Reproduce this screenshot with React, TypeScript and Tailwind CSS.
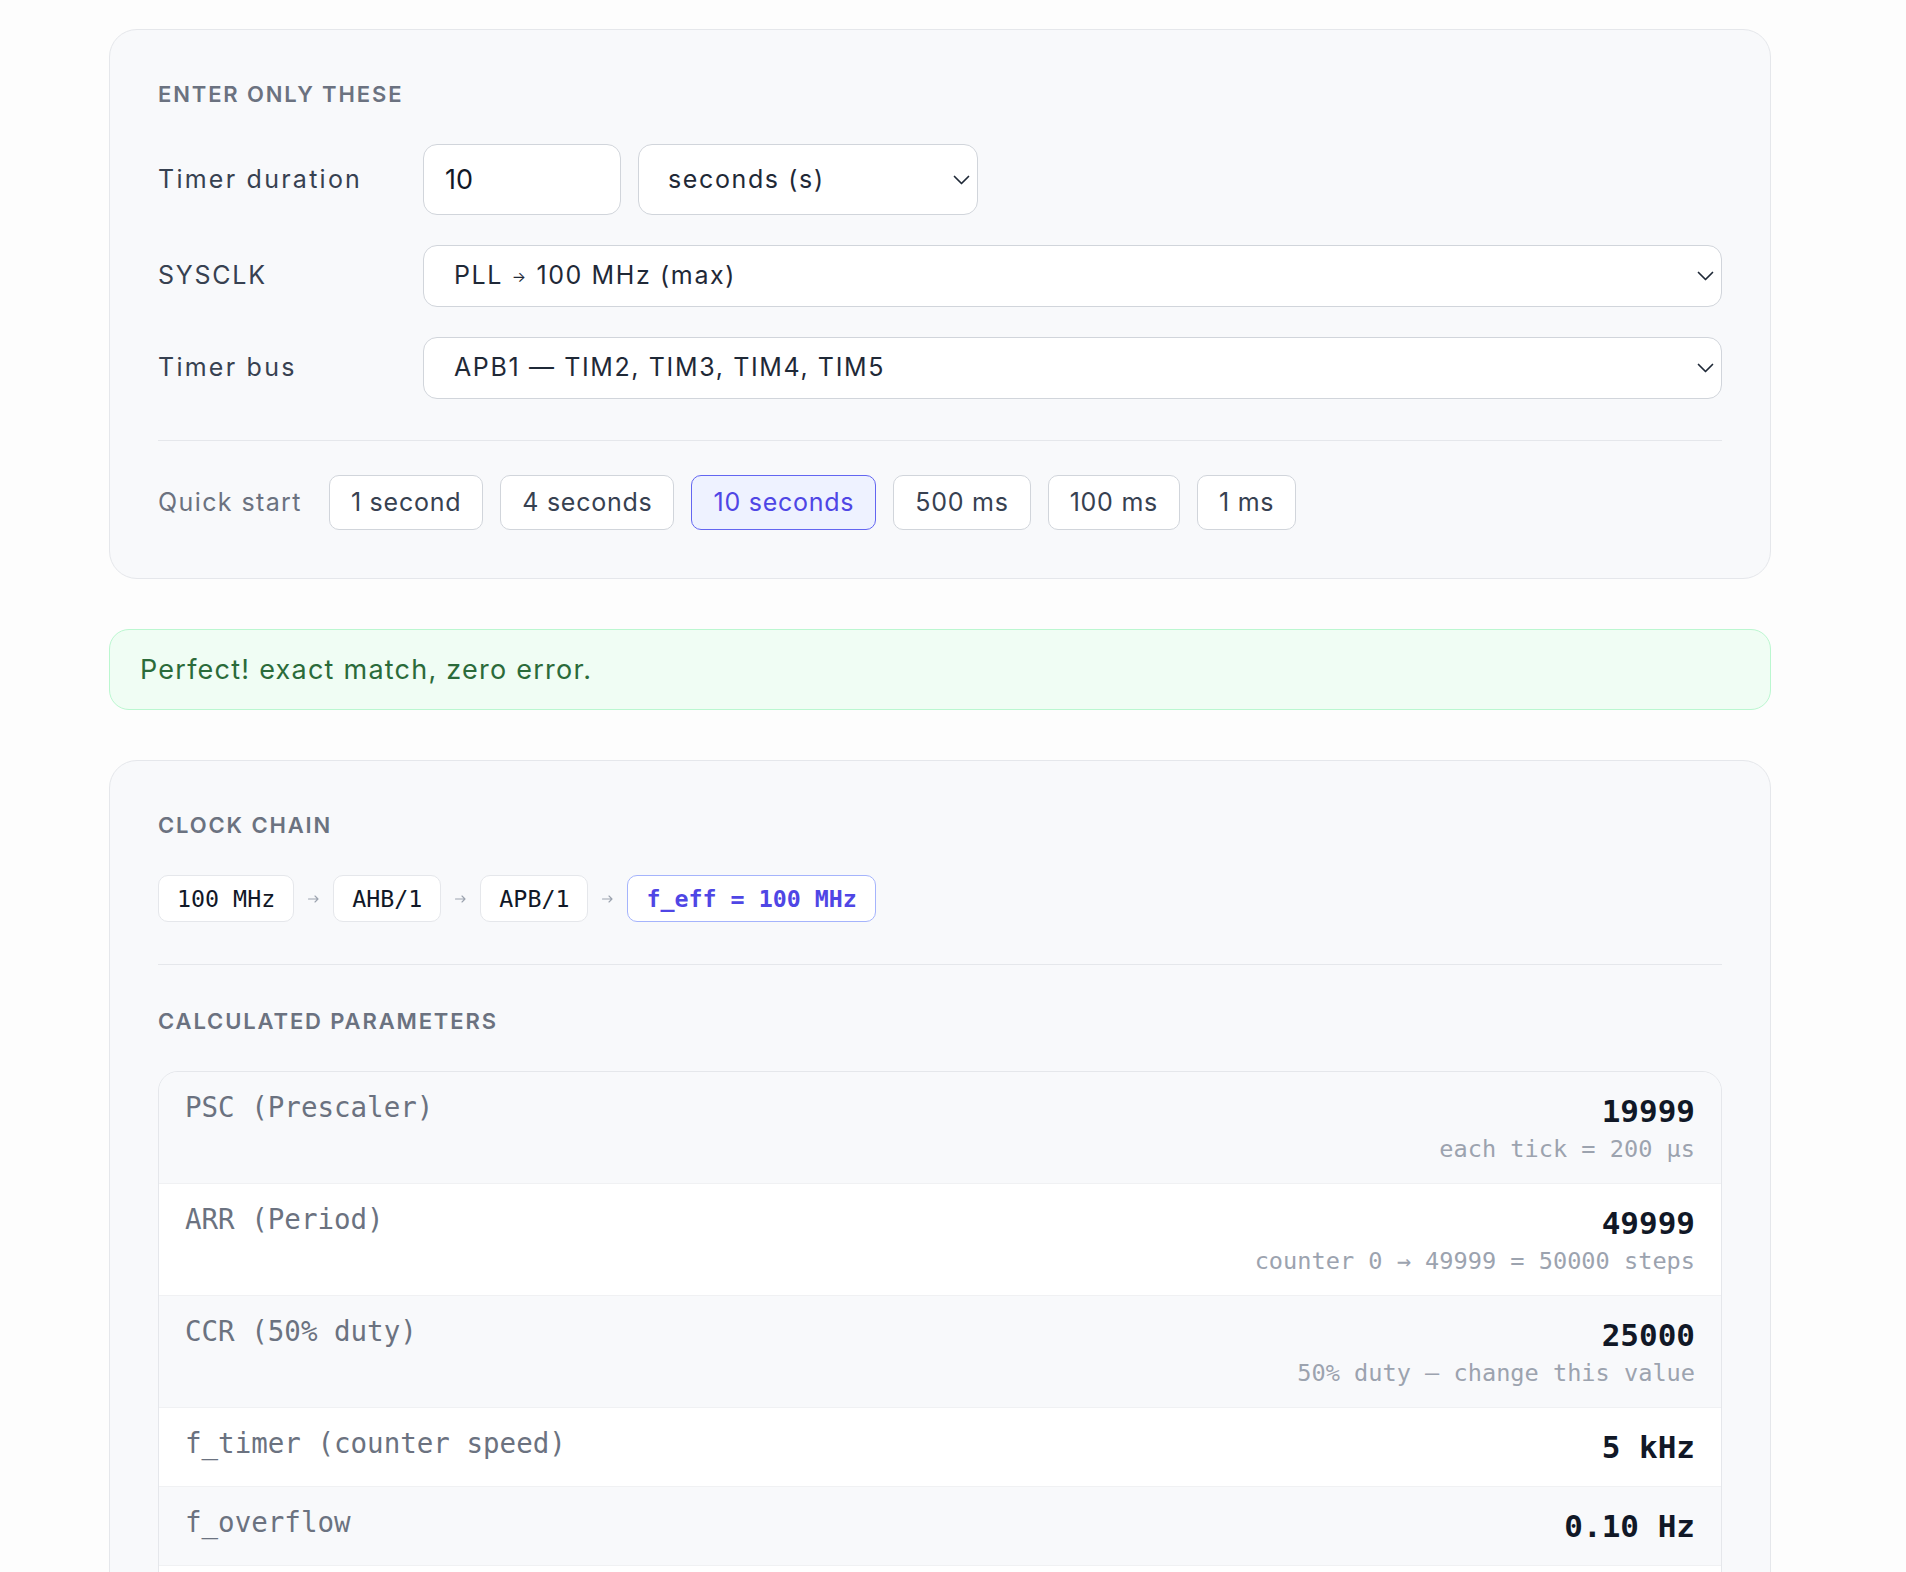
import { useState } from "react";

const QUICK = ["1 second", "4 seconds", "10 seconds", "500 ms", "100 ms", "1 ms"];
const CHAIN = ["100 MHz", "AHB/1", "APB/1"];
const PARAMS = [
  { label: "PSC (Prescaler)", value: "19999", note: "each tick = 200 µs" },
  { label: "ARR (Period)", value: "49999", note: "counter 0 → 49999 = 50000 steps" },
  { label: "CCR (50% duty)", value: "25000", note: "50% duty — change this value" },
  { label: "f_timer (counter speed)", value: "5 kHz" },
  { label: "f_overflow", value: "0.10 Hz" },
  { label: "Period", value: "10.000 s" },
];

const Chevron = () => (
  <svg width="17" height="10" viewBox="0 0 17 10" fill="none" className="shrink-0">
    <path d="M1.5 1.5l7 7 7-7" stroke="#1f2937" strokeWidth="1.7" strokeLinecap="round" strokeLinejoin="round" />
  </svg>
);

const Arrow = () => (
  <svg width="11" height="8" viewBox="0 0 11 8" fill="none" className="shrink-0">
    <path d="M0.5 4h9M7 1l3 3-3 3" stroke="#9ca3af" strokeWidth="1.1" strokeLinecap="round" strokeLinejoin="round" />
  </svg>
);

const Heading = ({ children }: { children: string }) => (
  <h2 className="text-[22px] leading-[33px] font-semibold tracking-[0.085em] uppercase text-[#6b7280]">{children}</h2>
);

const FakeSelect = ({ children, className }: { children: React.ReactNode; className: string }) => (
  <div className={`flex items-center justify-between rounded-[14px] border border-[#d1d5db] bg-white pr-[7px] text-[#1f2937] ${className}`}>
    <span className="tracking-[0.065em]">{children}</span>
    <Chevron />
  </div>
);

export default function App() {
  const [active, setActive] = useState("10 seconds");

  return (
    <div className="min-h-screen bg-[#fdfdfd] pb-[60px] font-['Inter','Noto_Sans',sans-serif]">
      <div className="ml-[109px] w-[1662px] pt-[29px] flex flex-col gap-[50px]">
        <section className="rounded-[28px] border border-[#e5e7eb] bg-[#f8f9fb] px-[48px] pt-[48px] pb-[48px]">
          <Heading>Enter only these</Heading>
          <div className="mt-[33px] flex flex-col gap-[30px]">
            <div className="grid grid-cols-[265px_1fr] items-center">
              <label className="text-[25px] tracking-[0.09em] text-[#374151]">Timer duration</label>
              <div className="flex items-center gap-[17px]">
                <input
                  defaultValue="10"
                  className="h-[71px] w-[198px] rounded-[14px] border border-[#d1d5db] bg-white px-[21px] text-[27px] text-[#111827] outline-none"
                />
                <FakeSelect className="h-[71px] w-[340px] pl-[29px] text-[25px]">seconds (s)</FakeSelect>
              </div>
            </div>
            <div className="grid grid-cols-[265px_1fr] items-center">
              <label className="text-[25px] tracking-[0.07em] text-[#374151]">SYSCLK</label>
              <FakeSelect className="h-[62px] pl-[30px] text-[25px]">
                PLL <span className="text-[15px] align-[2px]">→</span> 100 MHz (max)
              </FakeSelect>
            </div>
            <div className="grid grid-cols-[265px_1fr] items-center">
              <label className="text-[25px] tracking-[0.09em] text-[#374151]">Timer bus</label>
              <FakeSelect className="h-[62px] pl-[30px] text-[25px]">APB1 — TIM2, TIM3, TIM4, TIM5</FakeSelect>
            </div>
          </div>
          <div className="mt-[41px] h-px bg-[#e5e7eb]" />
          <div className="mt-[34px] flex items-center gap-[27px]">
            <span className="text-[25px] tracking-[0.056em] text-[#6b7280]">Quick start</span>
            <div className="flex gap-[17px]">
              {QUICK.map((q) =>
                q === active ? (
                  <button
                    key={q}
                    onClick={() => setActive(q)}
                    className="h-[55px] rounded-[10px] border border-[#6366f1] bg-[#eef2ff] px-[21px] text-[25px] tracking-[0.03em] text-[#4f46e5]"
                  >
                    {q}
                  </button>
                ) : (
                  <button
                    key={q}
                    onClick={() => setActive(q)}
                    className="h-[55px] rounded-[10px] border border-[#d1d5db] bg-white px-[21px] text-[25px] tracking-[0.03em] text-[#374151]"
                  >
                    {q}
                  </button>
                )
              )}
            </div>
          </div>
        </section>

        <div className="rounded-[20px] border border-[#bbf7d0] bg-[#f0fdf4] px-[30px] py-[22px] text-[27px] leading-[35px] tracking-[0.046em] text-[#2b6b3a]">
          Perfect! exact match, zero error.
        </div>

        <section className="rounded-[28px] border border-[#e5e7eb] bg-[#f8f9fb] px-[48px] pt-[48px] pb-[48px]">
          <Heading>Clock chain</Heading>
          <div className="mt-[33px] flex items-center gap-[14px] font-['DejaVu_Sans_Mono',monospace] text-[23.3px] leading-[31px]">
            {CHAIN.map((c) => (
              <div key={c} className="flex items-center gap-[14px]">
                <span className="rounded-[10px] border border-[#e5e7eb] bg-white px-[18px] py-[7px] text-[#111827]">{c}</span>
                <Arrow />
              </div>
            ))}
            <span className="rounded-[10px] border border-[#a5b4fc] bg-white px-[18px] py-[7px] font-bold text-[#4f46e5]">f_eff = 100 MHz</span>
          </div>
          <div className="mt-[42px] h-px bg-[#e5e7eb]" />
          <div className="mt-[40px]">
            <Heading>Calculated parameters</Heading>
          </div>
          <div className="mt-[33px] overflow-hidden rounded-[20px] border border-[#e5e7eb] font-['DejaVu_Sans_Mono',monospace]">
            {PARAMS.map((p, i) => (
              <div
                key={p.label}
                className={`flex items-start justify-between px-[26px] py-[20px] ${i > 0 ? "border-t border-[#f0f1f3]" : ""} ${i % 2 === 0 ? "bg-[#f8f9fb]" : "bg-white"}`}
              >
                <span className="text-[27.5px] leading-[30px] text-[#6b7280]">{p.label}</span>
                <div className="flex flex-col items-end">
                  <span className="text-[31px] leading-[38px] font-bold text-[#111827]">{p.value}</span>
                  {p.note && <span className="mt-[5px] text-[23.6px] leading-[28px] text-[#9ca3af]">{p.note}</span>}
                </div>
              </div>
            ))}
          </div>
        </section>
      </div>
    </div>
  );
}
